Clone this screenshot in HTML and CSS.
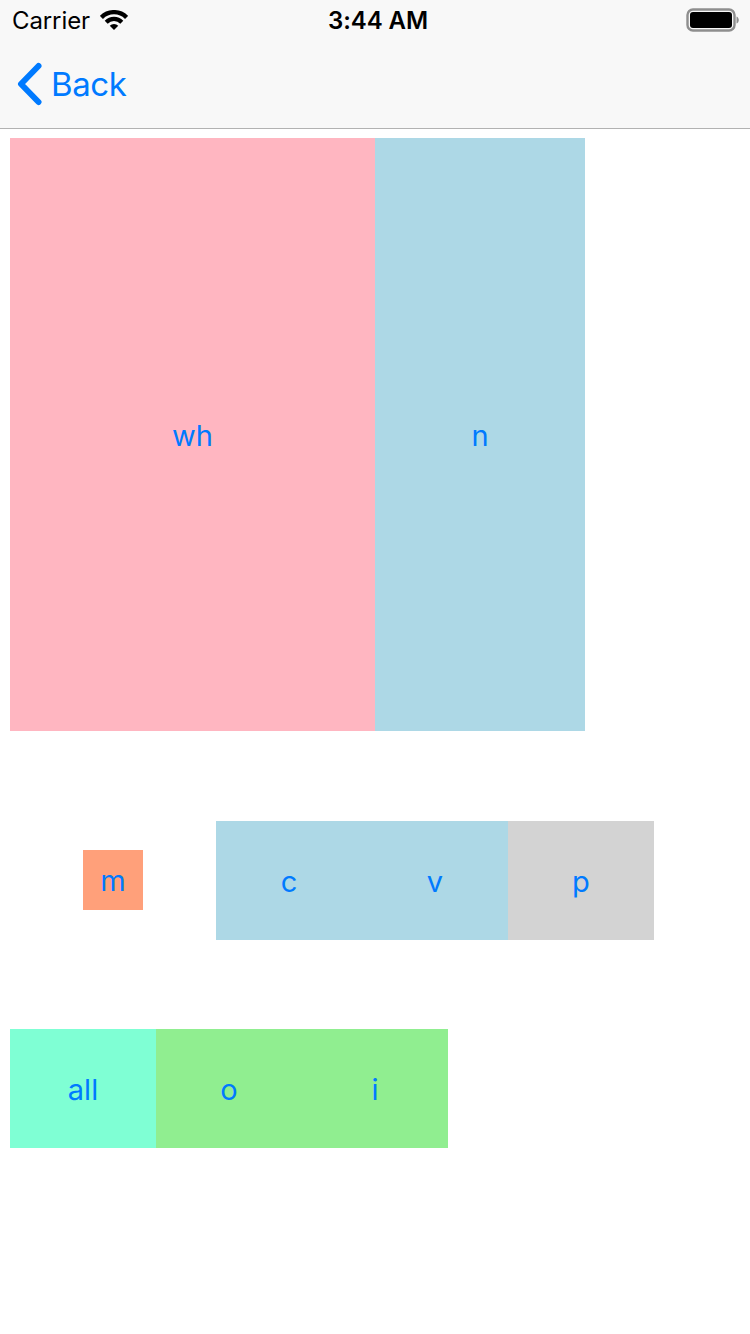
FILE: index.html
```html
<!DOCTYPE html>
<html lang="en">
<head>
<meta charset="utf-8">
<title>Back</title>
<link rel="stylesheet" href="styles.css">
</head>
<body>
<header class="bar">
  <div class="status">
    <div class="status-left">
      <span class="carrier">Carrier</span>
      <svg class="wifi" width="28" height="20" viewBox="0 0 28 20"><path d="M1.4 7.4A17.8 17.8 0 0 1 26.6 7.4" fill="none" stroke="#000" stroke-width="4.4"/><path d="M6.2 12.2A11 11 0 0 1 21.8 12.2" fill="none" stroke="#000" stroke-width="4.2"/><path d="M14 20 9.76 15.76A6 6 0 0 1 18.24 15.76Z" fill="#000"/></svg>
    </div>
    <span class="time">3:44 AM</span>
    <div class="status-right">
      <svg width="53" height="24" viewBox="0 0 53 24"><rect x="1.5" y="1.5" width="47" height="21" rx="5.5" fill="none" stroke="#8e8e8e" stroke-width="2.4"/><rect x="4" y="4" width="42" height="16" rx="3" fill="#000"/><path d="M50.5 8.5c1.5.5 2.3 2 2.3 3.5s-.8 3-2.3 3.5Z" fill="#8e8e8e"/></svg>
    </div>
  </div>
  <nav class="nav">
    <svg class="chevron" width="26" height="44" viewBox="0 0 26 44"><path d="M21.5 4 4 22 21.5 40" fill="none" stroke="#007aff" stroke-width="6" stroke-linecap="round" stroke-linejoin="round"/></svg>
    <span class="back">Back</span>
  </nav>
</header>
<main class="content">
  <div class="row row-a">
    <div class="cell pink wide">wh</div>
    <div class="cell blue mid">n</div>
  </div>
  <div class="row row-b">
    <div class="cell salmon small">m</div>
    <div class="group">
      <div class="cell blue unit">c</div>
      <div class="cell blue unit">v</div>
      <div class="cell gray unit">p</div>
    </div>
  </div>
  <div class="row row-c">
    <div class="cell aqua unit">all</div>
    <div class="cell green unit">o</div>
    <div class="cell green unit">i</div>
  </div>
</main>
</body>
</html>
```
FILE: styles.css
```css
* { box-sizing: border-box; }
html, body { margin: 0; height: 100%; background: #fff; }
body { font-family: Inter, "Liberation Sans", Arial, sans-serif; overflow: hidden; }

.bar {
  height: 129px;
  background: #f8f8f8;
  border-bottom: 1px solid #b2b2b2;
}
.status {
  height: 40px;
  display: grid;
  grid-template-columns: 1fr auto 1fr;
  align-items: center;
  padding: 0 11px 0 12px;
}
.status-left { display: flex; align-items: center; gap: 10px; }
.carrier { font-size: 24px; color: #000; letter-spacing: -.1px; }
.wifi { display: block; }
.time { font-size: 24px; font-weight: 600; color: #000; margin-left: 5px; letter-spacing: -.1px; }
.status-right { display: flex; justify-content: flex-end; }
.status-right svg { display: block; }

.nav {
  height: 88px;
  display: flex;
  align-items: center;
  padding-left: 17px;
  gap: 8px;
}
.chevron { display: block; }
.back { font-size: 33px; color: #007aff; letter-spacing: -.4px; }

.content { padding: 9px 0 0 10px; }
.row { display: flex; }
.row-a { height: 593px; }
.row-b { margin-top: 90px; height: 119px; align-items: center; }
.row-c { margin-top: 89px; height: 119px; }
.group { display: flex; height: 100%; margin-left: 73px; }

.cell {
  display: flex;
  align-items: center;
  justify-content: center;
  font-size: 29px;
  color: #007aff;
  padding-top: 2px;
}
.wide { width: 365px; }
.mid { width: 210px; }
.unit { width: 146px; height: 100%; }
.small { width: 60px; height: 60px; margin-left: 73px; margin-top: -1px; padding-top: 0; }

.pink { background: #ffb6c1; }
.blue { background: #add8e6; }
.salmon { background: #ffa07a; }
.gray { background: #d3d3d3; }
.aqua { background: #7fffd4; }
.green { background: #90ee90; }
```
